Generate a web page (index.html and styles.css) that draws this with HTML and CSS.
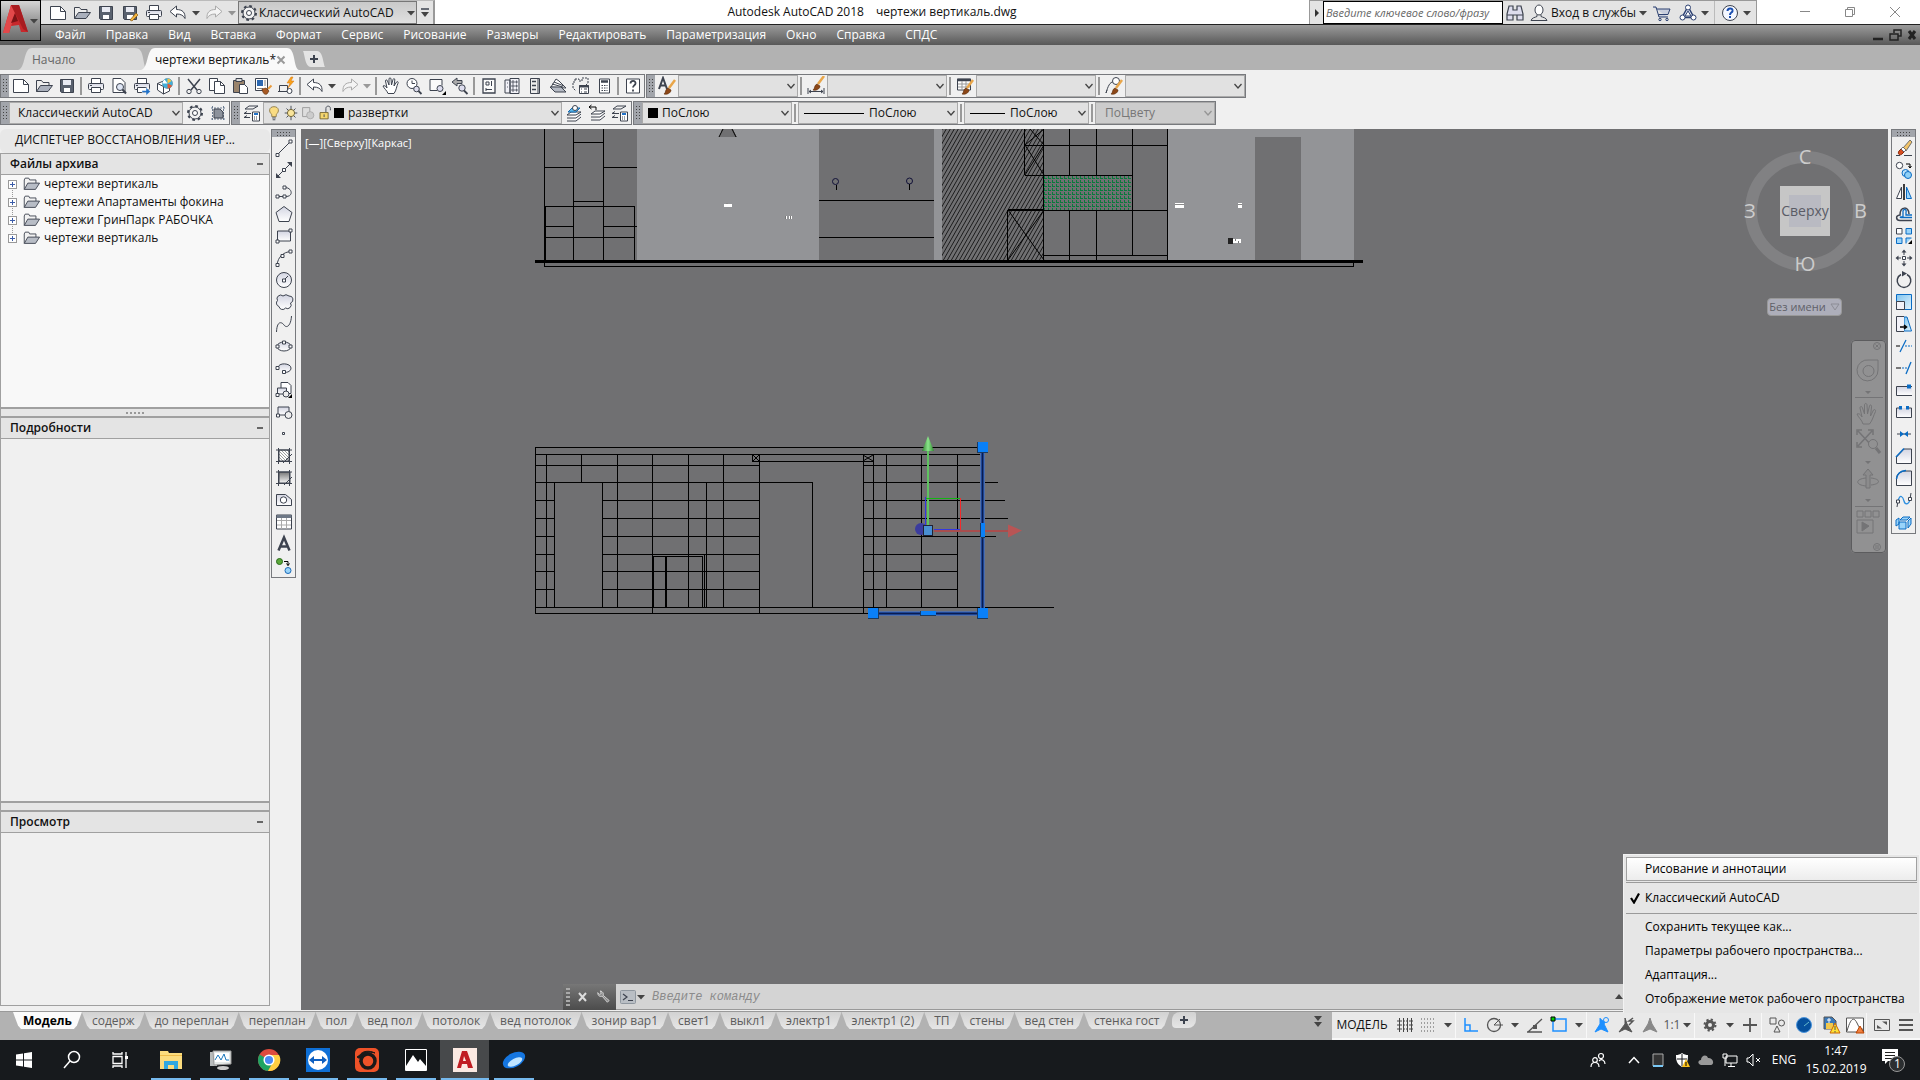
FILE: index.html
```html
<!DOCTYPE html>
<html lang="ru">
<head>
<meta charset="utf-8">
<title>Autodesk AutoCAD 2018 — чертежи вертикаль.dwg</title>
<link rel="stylesheet" href="styles.css">
</head>
<body>
<svg class="defs" aria-hidden="true">
<defs>
<linearGradient id="gl" x1="0" y1="0" x2="0" y2="1"><stop offset="0" stop-color="#d3d5e2"/><stop offset="1" stop-color="#fff"/></linearGradient>
<linearGradient id="gb" x1="0" y1="0" x2="1" y2="1"><stop offset="0" stop-color="#7fc4ee"/><stop offset="1" stop-color="#e4f4fd"/></linearGradient>
<linearGradient id="gd" x1="0" y1="0" x2="0" y2="1"><stop offset="0" stop-color="#777"/><stop offset="1" stop-color="#f4f4f4"/></linearGradient>
<linearGradient id="gg" x1="0" x2="1"><stop offset="0" stop-color="#2f7a2f"/><stop offset=".5" stop-color="#8be58b"/><stop offset="1" stop-color="#2f8a2f"/></linearGradient>
<pattern id="hatch" width="4" height="7" patternUnits="userSpaceOnUse"><path d="M-1 8.75 5-1.75M-5 8.75 1-1.75M3 8.75 9-1.75" stroke="#111" stroke-width=".9"/></pattern>
<pattern id="green" width="4" height="4" patternUnits="userSpaceOnUse"><path d="M.5 0v3M0 2.5h3" stroke="#0a7a3c" stroke-width="1"/></pattern>
<pattern id="small" width="3" height="3" patternUnits="userSpaceOnUse"><path d="M0 0 3 3" stroke="#777" stroke-width=".7"/></pattern>
</defs>
<symbol id="new" viewBox="0 0 20 20"><path d="M2.500 3.500h10l5 5v8h-15z" fill="#fff"/><path d="M12.500 3.500v5h5"/></symbol>
<symbol id="open" viewBox="0 0 20 20"><path d="M2.500 15.500V4.500h5l1.500 2h6v3" fill="#eee"/><path d="M2.500 15.500 6.500 9.500h12l-4.500 6z" fill="#aab0bc"/></symbol>
<symbol id="save" viewBox="0 0 20 20"><path d="M3.500 3.500h13v13h-12l-1-1z" fill="#59616e"/><path d="M6 4h8v5H6z" fill="#e8eaf2" stroke="none"/><path d="M7 12h6v4H7z" fill="#fff" stroke="none"/></symbol>
<symbol id="saveas" viewBox="0 0 20 20"><use href="#save"/><path d="m10 17 6-7 2 2-6 6z" fill="#f5b642" stroke="#8a5a10" stroke-width=".7"/></symbol>
<symbol id="print" viewBox="0 0 20 20"><path d="M5.500 7.500v-5h9v5" fill="#fff"/><rect x="2.500" y="7.500" width="15" height="6" rx="1" fill="url(#gl)"/><path d="M5.500 11.500h9v5h-9z" fill="#fff"/><path d="M4 9.500h2"/></symbol>
<symbol id="preview" viewBox="0 0 20 20"><path d="M4 2.500h8l4 4v10H4z" fill="#fff"/><circle cx="11" cy="11" r="3.500" fill="#dfe6f5"/><path d="m13.500 13.500 3.500 4" stroke-width="2"/></symbol>
<symbol id="publish" viewBox="0 0 20 20"><use href="#print"/><path d="M10 14.500h4v-3l4.500 4-4.500 4v-3h-4z" fill="#2272c8" stroke="#fff" stroke-width=".5"/></symbol>
<symbol id="cube" viewBox="0 0 20 20"><path d="m2.500 7.500 6-2.500v0l6 3v7l-6 3-6-4z" fill="#fff"/><path d="m2.500 7.500 6 3v7.500M8.500 10.500l3-1.500"/><circle cx="12.500" cy="7.500" r="5" fill="#3fb0dc" stroke="#3d7f9c" stroke-width=".6"/><path d="M12.500 7.500V2.500a5 5 0 0 1 4 2.500z" fill="#f5c542" stroke="none"/><path d="m12.500 7.500 4.500 2a5 5 0 0 1-4.500 3z" fill="#e25a35" stroke="none"/><path d="m12.500 7.500-5 0a5 5 0 0 1 2-4z" fill="#fff" stroke="none"/></symbol>
<symbol id="cut" viewBox="0 0 20 20"><path d="m4 3 9 11M16 3 7 14" stroke-width="1.500"/><circle cx="5" cy="15.500" r="2.200"/><circle cx="15" cy="15.500" r="2.200"/></symbol>
<symbol id="copy" viewBox="0 0 20 20"><path d="M2.500 2.500h8v12h-8z" fill="#fff"/><path d="M7.500 5.500h6l4 4v8h-10z" fill="#fff"/><path d="M13.500 5.500v4h4"/></symbol>
<symbol id="paste" viewBox="0 0 20 20"><path d="M3.500 4.500h11v12h-11z" fill="#9a846c"/><path d="M6 2.500h6v3H6z" fill="#ddd"/><path d="M9.500 8.500h5l3 3v6h-8z" fill="#fff"/></symbol>
<symbol id="match" viewBox="0 0 20 20"><path d="M2.500 2.500h12v12h-12z" fill="#fff"/><path d="M4 4h6v6H4z" fill="#2b67b0" stroke="none"/><path d="M12 4v6M4 12.500h6" stroke="#888"/><path d="m9 13 4-1 3 3-2 3c-2 1-4 0-5-5z" fill="#a85a24" stroke="#5a2c0a" stroke-width=".6"/><path d="m15 13 3.500-3.500" stroke="#e89a3c" stroke-width="2"/></symbol>
<symbol id="block" viewBox="0 0 20 20"><path d="M3.500 9.500h8v6h-8zM2 15.500h10"/><circle cx="13.500" cy="15" r="2.500" fill="#fff"/><path d="m15 1-4 6h3l-2 5 6-7h-3l2-4z" fill="#f8a21c" stroke="#d6720a" stroke-width=".5"/></symbol>
<symbol id="undo" viewBox="0 0 20 20"><path d="M2 8.500 8.500 3v3.500c6 0 9 3 8.500 9-1.500-3-4-4.500-8.500-4.500v3z" fill="#fff"/></symbol>
<symbol id="redo" viewBox="0 0 20 20"><path d="M18 8.500 11.500 3v3.500c-6 0-9 3-8.500 9 1.500-3 4-4.500 8.500-4.500v3z" fill="#f4f4f4" stroke="#aaa"/></symbol>
<symbol id="hand" viewBox="0 0 20 20"><path d="M7 17.500c-1-3-4-5-5-7.500 1.500-1 3 .5 4 2L4.500 5c0-1.500 1.500-1.500 2 0L8 9 8 3c0-1.500 2-1.500 2 0l.5 6 1.500-5.500c.5-1.500 2-1 1.800.5L13 10l2.500-4c1-1 2.200 0 1.500 1.200-1.500 3-1.500 7-4 10.300z" fill="#fff"/></symbol>
<symbol id="zoomrt" viewBox="0 0 20 20"><circle cx="8" cy="7.500" r="5" fill="#fff"/><path d="M8 4.500v3h3"/><circle cx="12.500" cy="13" r="2.800" fill="#dde"/><path d="m14.500 15 3 3" stroke-width="1.800"/></symbol>
<symbol id="zoomwin" viewBox="0 0 20 20"><path d="M10 14.500H3v-11h12v6" fill="#fafafa"/><circle cx="13" cy="12.500" r="3" fill="#dde"/><path d="M19 19v-4l-4 4z" fill="#000" stroke="none"/></symbol>
<symbol id="zoomprev" viewBox="0 0 20 20"><path d="m2 6 5-4v2.500h5v3H7V10z" fill="#aaa"/><circle cx="12" cy="12" r="3.200" fill="#dde"/><path d="m14 14.500 3.500 3.500" stroke-width="1.800"/></symbol>
<symbol id="props" viewBox="0 0 20 20"><path d="M4 3h12v14H4z" fill="#fafafa" stroke-width="1.300"/><path d="M7 6h3v3H7zM12.500 5v5M7 13.500h6M7 12v3"/></symbol>
<symbol id="dc" viewBox="0 0 20 20"><path d="M3 4h5v13H3zM8 2.500h9v15H8z" fill="#f2f2f8"/><path d="M10 5h2v2h-2zM14 5h1v2h-1zM10 9h2v2h-2zM14 9h1v2h-1zM10 13h2v2h-2zM14 13h1v2h-1zM5 7h1M5 11h1" stroke-width=".8"/></symbol>
<symbol id="tools" viewBox="0 0 20 20"><path d="M5.500 2.500h9v15h-9z" fill="#eee"/><path d="M7 5.500h4M7 9.500h4M7 13.500h4" stroke-width="1.500"/><path d="M13 3v14"/></symbol>
<symbol id="sheets" viewBox="0 0 20 20"><path d="m3 11 5-8 3 2 7 7z" fill="#fff"/><path d="m2 11 11 0 5 5-11 0z" fill="#b5bac4"/><path d="m4 8 11 3M6 6l10 4"/></symbol>
<symbol id="markup" viewBox="0 0 20 20"><path d="M4 3h4v2h3V2h6v5l-2 2v2M4 3v3H2v6l3 3" stroke-dasharray="2 1"/><path d="M8.500 9.500h9v8h-9z" fill="#fff"/><path d="M8 10.500h10" stroke-width="2"/><path d="M10 13h1M13 13h3M10 16h1M13 16h3"/></symbol>
<symbol id="calc" viewBox="0 0 20 20"><path d="M5.500 3h10v14h-10z" fill="#fff"/><path d="M7 5.500h7" stroke-width="2.500"/><path d="M7.500 9.500h6M7.500 12h6M7.500 14.500h6" stroke-dasharray="1.500 1"/></symbol>
<symbol id="help" viewBox="0 0 20 20"><path d="M3.500 3h13v14h-13z" fill="#fff"/><path d="M7.500 7.500c0-3.500 5.500-3.500 5 0-.3 1.800-2.500 2-2.500 4M10 13.500v2" stroke-width="1.800"/></symbol>
<symbol id="brush" viewBox="0 0 20 20"><path d="m12 12 6-8" stroke="#e9a64a" stroke-width="2.500"/><path d="M7 18c2-1 1-5 4-6l3 2c0 3-4 5-7 4z" fill="#8c4717" stroke="#5a2c0a" stroke-width=".6"/></symbol>
<symbol id="bA" viewBox="0 0 20 20"><path d="m2 13 4-11 4 11M3.500 9.500h5" stroke-width="2"/><use href="#brush"/></symbol>
<symbol id="bD" viewBox="0 0 20 20"><path d="M2 12v6M18 12v6M3 15.500h14M5 14l-2 1.500L5 17M15 14l2 1.500-2 1.500"/><use href="#brush" y="-4"/></symbol>
<symbol id="bT" viewBox="0 0 20 20"><path d="M2.500 3h13v11h-13z" fill="#fff"/><path d="M2 4h14" stroke-width="2.500"/><path d="M3 8h12M3 11h12M7 5v9M11 5v9" stroke="#999"/><use href="#brush"/></symbol>
<symbol id="bM" viewBox="0 0 20 20"><path d="m2 17 1-3M2 17C4 10 6 6 9 6"/><circle cx="12" cy="5" r="3.500" fill="#fff"/><use href="#brush"/></symbol>
<symbol id="gear" viewBox="0 0 20 20"><circle cx="10" cy="10" r="7" stroke-width="2" stroke-dasharray="2.750 2.750"/><circle cx="10" cy="10" r="6" fill="#f2f2f2"/><circle cx="10" cy="10" r="2.500" fill="#fff"/></symbol>
<symbol id="wsave" viewBox="0 0 20 20"><path d="M3 5h14M3 16h14M4.500 3v14M15.500 3v14" stroke-dasharray="2 1" stroke="#6a7a90"/><path d="M6 6h6l3 3v6H6z" fill="#8c929c"/></symbol>
<symbol id="layers" viewBox="0 0 20 20"><path d="m7 3-4 3h8l5-3zM5 8.500l-3 2h7M5 12.500l-3 2h6" fill="none"/><path d="M10.500 9h7v9h-7z" fill="#fff"/><path d="M12 11h4" stroke="#2272c8" stroke-width="2"/><path d="M12 14h4M12 16h4" stroke-dasharray="1 1"/></symbol>
<symbol id="lay2" viewBox="0 0 20 20"><path d="m7 9-4 3h9l5-3zM3 15h9l5-4M3 18h9l5-4" fill="#fff"/><path d="m4 9 4-4h8l-4 4z" fill="#58b6e8" stroke="#176bb0"/><circle cx="11" cy="5" r="2.500" fill="#fff"/></symbol>
<symbol id="lay3" viewBox="0 0 20 20"><path d="m8 8-4 3h9l5-3zM4 14h9l5-4M4 17h9l5-4" fill="#fff"/><path d="M2 4h7v3M4.500 2 2 4l2.500 2" stroke="#000"/></symbol>
<symbol id="bulb" viewBox="0 0 16 20"><path d="M8 3c-6 0-6 6-2.500 8.500V14h5v-2.500C14 9 14 3 8 3z" fill="#f9dc83" stroke="#8f7a45"/><path d="M6 15.500h4M6.500 17.500h3"/></symbol>
<symbol id="sun" viewBox="0 0 16 20"><path d="M8 2v16M1 10h14M3 5l10 10M13 5 3 15"/><circle cx="8" cy="10" r="4" fill="#f9e49a" stroke="#6b5d2e"/></symbol>
<symbol id="vpf" viewBox="0 0 16 20"><path d="M2 4h8v10H2z" fill="#ddd" stroke="#999"/><circle cx="10.500" cy="12.500" r="4" fill="#ccc" stroke="#aaa"/></symbol>
<symbol id="lock" viewBox="0 0 16 20"><path d="M9 9V5c0-3.500 5-3.500 5 0v2"/><path d="M2.500 9.500h9v7h-9z" fill="#f5d66d" stroke="#75642d"/><path d="M7 11.500v3"/></symbol>
<symbol id="folder" viewBox="0 0 20 20"><path d="M2.500 16V5.500l1-2h4l1 2h7V9" fill="#f2f2f2"/><path d="M2.500 16 6.500 9h13l-4.500 7z" fill="#b8bdc6"/></symbol>
<symbol id="line" viewBox="0 0 20 20"><path d="M4 16 16 4"/><g fill="#fff"><path d="M2 15.500h3v3H2zM15 2h3v3h-3z"/></g></symbol>
<symbol id="xline" viewBox="0 0 20 20"><path d="M4 16 16 4"/><path d="M2 18v-5l5 5zM18 2v5l-5-5z" fill="#3d434f" stroke="none"/><path d="M8.500 8.500h3v3h-3z" fill="#fff"/></symbol>
<symbol id="pline" viewBox="0 0 20 20"><path d="M4 14.500h8c8 0 6-9-1-9"/><path d="M2 13h3v3H2zM9 13h3v3H9zM9 4h3v3H9z" fill="#fff"/></symbol>
<symbol id="poly" viewBox="0 0 20 20"><path d="M10 2.500 18 8.500l-3 9H5l-3-9z" fill="url(#gl)"/></symbol>
<symbol id="rect" viewBox="0 0 20 20"><path d="M3.500 5h13v10h-13z" fill="url(#gl)"/><path d="M2 14h3v3H2zM15 3h3v3h-3z" fill="#fff"/></symbol>
<symbol id="arc" viewBox="0 0 20 20"><path d="M3 17C4 9 9 4 17 3.500"/><path d="M2 15.500h3v3H2zM7 6.500h3v3H7zM15 2h3v3h-3z" fill="#fff"/></symbol>
<symbol id="circ" viewBox="0 0 20 20"><circle cx="10" cy="10" r="7.500" fill="url(#gl)"/><path d="m10 10 4-4"/><path d="M8.500 9h3v3h-3z" fill="#fff"/></symbol>
<symbol id="cloud" viewBox="0 0 20 20"><path d="M9 4a3.600 3.600 0 0 0-5.500 4.500 3.600 3.600 0 0 0 1.500 6 3.600 3.600 0 0 0 6.500 1.500 3.600 3.600 0 0 0 5-5 3.600 3.600 0 0 0-1.500-7 4.600 4.600 0 0 0-6 0z" fill="url(#gl)"/></symbol>
<symbol id="spl" viewBox="0 0 20 20"><path d="M2.500 18C3 6 8 8 10 11c3 4 7 0 7.500-9"/></symbol>
<symbol id="ell" viewBox="0 0 20 20"><ellipse cx="10" cy="10.500" rx="7" ry="4.500" fill="url(#gl)"/><path d="M2 9h3v3H2zM15 9h3v3h-3zM8.500 5h3v3h-3z" fill="#fff"/></symbol>
<symbol id="ella" viewBox="0 0 20 20"><path d="M4 10c0-6 13-5 13 0 0 3-3 4.500-7 4.500" fill="url(#gl)"/><path d="M2 8.500h3v3H2zM8.500 12.500h3v3h-3z" fill="#fff"/></symbol>
<symbol id="ins" viewBox="0 0 20 20"><path d="M7 2.500h7l3 3v8H7z" fill="#fff"/><path d="M3.500 8h9v6h-9z" fill="url(#gl)"/><circle cx="12" cy="14" r="3" fill="#eee"/><path d="M2 13.500h3v3H2z" fill="#fff"/><path d="M18 18v-4l-4 4z" fill="#000" stroke="none"/></symbol>
<symbol id="mkb" viewBox="0 0 20 20"><path d="M4 5h11v8H4z" fill="url(#gl)"/><circle cx="14.500" cy="13" r="3.500" fill="#eee"/><path d="M2.500 12h3v3h-3z" fill="#fff"/></symbol>
<symbol id="pt" viewBox="0 0 20 20"><path d="M8.500 8.500h2v2h-2z" fill="#fff"/></symbol>
<symbol id="hat" viewBox="0 0 20 20"><path d="M5 4h10v11H5z" fill="#fff" stroke="none"/><path d="M5 4h10v11H5z" fill="url(#small)"/><path d="M2 4h16M2 15.500h16M4.500 2v16M15.500 2v16M9 17l9-9"/></symbol>
<symbol id="grad" viewBox="0 0 20 20"><path d="M5 4h11v11H5z" fill="url(#gd)"/><path d="M2 4h16M2 15.500h16M4.500 2v16M15.500 2v16M10 17l8-8"/></symbol>
<symbol id="region" viewBox="0 0 20 20"><path d="M2.500 4.500h9l6 5v6h-15z" fill="url(#gl)"/><circle cx="9.500" cy="10" r="3.200" fill="#fff"/></symbol>
<symbol id="table" viewBox="0 0 20 20"><path d="M2.500 3h15v14h-15z" fill="#fff"/><path d="M3 8.500h14M3 13h14M7.500 6v11M12.500 6v11" stroke="#aaa"/><path d="M2.500 4.500h15" stroke-width="3" stroke="#6e7886"/></symbol>
<symbol id="mt" viewBox="0 0 20 20"><path d="m4.500 16.500 5.500-13 5.500 13M6.500 12.500h7" stroke-width="2.500"/></symbol>
<symbol id="adds" viewBox="0 0 20 20"><circle cx="5.500" cy="5.500" r="3" fill="#5aa83a" stroke="#2a6a1a"/><circle cx="14" cy="14.500" r="3" fill="#9ad4fa" stroke="#1a6ab8"/><path d="M10 5.500h4v4M12.500 7.500 14 9.500l1.500-2" stroke="#000"/></symbol>
<symbol id="erase" viewBox="0 0 20 20"><path d="m9 10 7-8 2 2-6 9z" fill="#f2c46a" stroke-width=".7"/><path d="m5 13 2-2 3 3-2 2c-2 2-5 0-3-3z" fill="#d84d20" stroke="#8a2a0a"/><path d="m7 11 2-2 3 3-2 2z" fill="#fff" stroke-width=".7"/><path d="M2 17.500h4M10 17.500h8"/></symbol>
<symbol id="mcopy" viewBox="0 0 20 20"><circle cx="5.500" cy="5.500" r="3.200" fill="#fff"/><path d="M12 4h4v4M14.500 6 16 8l1.500-2" stroke="#000"/><circle cx="11.500" cy="13" r="3.500" fill="#bfe4fa" stroke="#0a6cc4"/><circle cx="14" cy="15" r="3.500" fill="#8fd0f6" stroke="#0a6cc4"/></symbol>
<symbol id="mirror" viewBox="0 0 20 20"><path d="M2.500 16.500 7.500 5v11.500z" fill="#fff"/><path d="M17.500 16.500 12.500 5v11.500z" fill="#9ad4fa" stroke="#0a6cc4"/><path d="M10 2v16" stroke="#000" stroke-width="1.500"/></symbol>
<symbol id="offset" viewBox="0 0 20 20"><path d="M18 16.500H6c-4 0-5-5 0-5.500 0-9 9-9 9-1" stroke-width="1.500"/><path d="M18 13.500H7c-1 0-1-.5 0-.5h2V7c1-3 4-1 3 1v3h6" stroke="#0a6cc4" stroke-width="1.300"/></symbol>
<symbol id="array" viewBox="0 0 20 20"><path d="M2.500 2.500h5.500v5.500H2.500z" fill="#fff"/><path d="M12 2.500h5.500v5.500H12zM2.500 12h5.500v5.500H2.500zM12 17.500V12h5.500" fill="#9ad4fa" stroke="#0a6cc4"/><path d="M18 18v-4l-4 4z" fill="#000" stroke="none"/></symbol>
<symbol id="move" viewBox="0 0 20 20"><path d="M8.500 8.500h3v3h-3zM10 7V4M10 13v3M7 10H4M13 10h3" fill="#fff"/><path d="m10 1.500 2.500 3h-5zM10 18.500l2.500-3h-5zM1.500 10l3-2.500v5zM18.500 10l-3-2.500v5z" fill="#3d434f" stroke="none"/></symbol>
<symbol id="rot" viewBox="0 0 20 20"><path d="M13 4.500a6.800 6.800 0 1 1-6 0" stroke-width="1.500"/><path d="m8 1 5 2.500-5 3z" fill="#3d434f" stroke="none"/></symbol>
<symbol id="scale" viewBox="0 0 20 20"><path d="M2.500 2.500h15v15h-15z" fill="url(#gb)" stroke="#0a6cc4"/><path d="M2.500 9.500h8v8h-8z" fill="#f2f2f8"/></symbol>
<symbol id="stretch" viewBox="0 0 20 20"><path d="M10 3h3l4.500 14H10z" fill="url(#gb)" stroke="#0a6cc4"/><path d="M10 2.500H2.500v15H10" fill="#f2f2f8"/><path d="M6 13h6M10 11l2.500 2-2.500 2" stroke="#000" stroke-width="1.500"/></symbol>
<symbol id="trim" viewBox="0 0 20 20"><path d="M2 10h4" stroke="#000"/><path d="m6 16 6-12" stroke="#0a6cc4" stroke-width="1.300"/><path d="M11 10h7" stroke="#0a6cc4" stroke-dasharray="2 1"/></symbol>
<symbol id="extend" viewBox="0 0 20 20"><path d="M2 10h5" stroke="#000"/><path d="m12 16 5-12" stroke="#0a6cc4" stroke-width="1.300"/><path d="M8 10h5" stroke="#0a6cc4" stroke-dasharray="2 1"/></symbol>
<symbol id="brkp" viewBox="0 0 20 20"><path d="M18 6.500H2.500v9H18" fill="url(#gl)"/><path d="M13 4.500h4v4h-4z" fill="#0a6cc4" stroke="none"/></symbol>
<symbol id="brk" viewBox="0 0 20 20"><path d="M5 6H2.500v9.500h15V6H15" fill="url(#gl)"/><path d="M5 4h3v3.500H5zM12 4h3v3.500h-3z" fill="#0a6cc4" stroke="none"/></symbol>
<symbol id="join" viewBox="0 0 20 20"><path d="M3 10h14"/><path d="m6 7 4 3-4 3zM14 7l-4 3 4 3z" fill="#0a6cc4" stroke="none"/></symbol>
<symbol id="cham" viewBox="0 0 20 20"><path d="M2.500 11v6.500h15V3H10z" fill="url(#gl)"/><path d="m2 11 8-8.500" stroke="#0a6cc4" stroke-width="1.500"/></symbol>
<symbol id="fil" viewBox="0 0 20 20"><path d="M2.500 11v6.500h15V3H12C6 3 2.500 6 2.500 11z" fill="url(#gl)"/><path d="M2.500 11C3 6 6 3 12 2.500" stroke="#0a6cc4" stroke-width="1.500"/></symbol>
<symbol id="blend" viewBox="0 0 20 20"><path d="m3 17 1-6M17 3l-1 6"/><path d="M4 11c2-8 5-4 6 0s5 4 6-2" stroke="#2d8fe0" stroke-width="1.300"/><path d="M2.500 10h3v3h-3zM14.500 7.500h3v3h-3z" fill="#fff"/></symbol>
<symbol id="expl" viewBox="0 0 20 20"><path d="m6 8 3-3h7l-3 3zM14 9l3-3v6l-3 4zM5 10h7v7H5zM2 8l3-2v6l-3 2z" fill="#9ad4fa" stroke="#0a6cc4"/></symbol>
<symbol id="dn" viewBox="0 0 10 10"><path d="M1 3h8L5 7.500z" fill="#444" stroke="none"/></symbol>
<symbol id="chev" viewBox="0 0 10 10"><path d="m1.500 3 3.500 4 3.500-4" stroke="#444" stroke-width="1.300"/></symbol>
</svg>

<header class="title">
  <div class="qat">
    <button aria-label="Создать"><svg><use href="#new"/></svg></button><button aria-label="Открыть"><svg><use href="#open"/></svg></button><button aria-label="Сохранить"><svg><use href="#save"/></svg></button><button aria-label="Сохранить как"><svg><use href="#saveas"/></svg></button><button aria-label="Печать"><svg><use href="#print"/></svg></button><button aria-label="Отменить"><svg><use href="#undo"/></svg></button><button class="dd" aria-label="Список отмены"><svg><use href="#dn"/></svg></button><button aria-label="Повторить"><svg><use href="#redo"/></svg></button><button class="dd dim" aria-label="Список повтора"><svg><use href="#dn"/></svg></button>
    <div class="wsbox"><svg><use href="#gear"/></svg><select aria-label="Рабочее пространство"><option>Классический AutoCAD</option></select><svg class="a"><use href="#dn"/></svg></div>
    <button class="more" aria-label="Адаптация панели"><svg viewBox="0 0 10 12"><path d="M1 2h8" stroke-width="1.500"/><path d="M1 5h8L5 10z" fill="#444" stroke="none"/></svg></button>
  </div>
  <div class="caption"><span>Autodesk AutoCAD 2018</span><span>чертежи вертикаль.dwg</span></div>
  <div class="info">
    <button class="tiny" aria-label="Свернуть"><svg viewBox="0 0 10 10"><path d="m3 1 4 4-4 4z" fill="#333" stroke="none"/></svg></button>
    <input type="text" placeholder="Введите ключевое слово/фразу" aria-label="Поиск">
    <button aria-label="Найти"><svg viewBox="0 0 20 20"><path d="M4 3h4v4h4V3h4l2 8v6h-6v-5H8v5H2v-6zM2 12h6M12 12h6" fill="#dde" stroke-width="1.200"/></svg></button>
    <button class="login"><svg viewBox="0 0 20 20"><ellipse cx="10" cy="7" rx="4" ry="5" fill="#fff"/><path d="M2 17.500c1-3 4-3 6-4v-2M18 17.500c-1-3-4-3-6-4v-2M2 17.500h16" fill="none"/></svg><span>Вход в службы</span><svg class="a"><use href="#dn"/></svg></button>
    <button aria-label="Магазин"><svg viewBox="0 0 20 20"><path d="M1 4h3l3 10h9M5 6h13l-2 5.500H6.500" fill="#c8cede" stroke="#2c4070"/><circle cx="8" cy="16.500" r="1.200" stroke="#2c4070"/><circle cx="15" cy="16.500" r="1.200" stroke="#2c4070"/></svg></button>
    <button class="wide" aria-label="Приложения"><svg viewBox="0 0 20 20"><g stroke="#2c4070"><path d="m10 3.500 6 11H4z" stroke-width="1.500" fill="#dde3f2"/><path d="m10 8 3 5H7z" fill="#fff"/><circle cx="10" cy="4.500" r="2.500" fill="#fff"/><circle cx="4.500" cy="14.500" r="2.500" fill="#fff"/><circle cx="15.500" cy="14.500" r="2.500" fill="#fff"/></g></svg><svg class="a"><use href="#dn"/></svg></button>
    <button class="wide hlp" aria-label="Справка"><svg viewBox="0 0 20 20"><circle cx="10" cy="10" r="7.500" fill="#f4f7ff"/><path d="M7.500 8c0-3.500 5.500-3.500 5 0-.3 1.800-2.500 1.500-2.500 4M10 13v2" stroke="#1b4fb0" stroke-width="2"/></svg><svg class="a"><use href="#dn"/></svg></button>
  </div>
  <div class="win">
    <button aria-label="Свернуть окно"><svg viewBox="0 0 12 12"><path d="M1 5.500h10"/></svg></button><button aria-label="Восстановить окно"><svg viewBox="0 0 12 12"><path d="M1.500 3.500h7v7h-7zM3.500 3.500v-2h7v7h-2"/></svg></button><button aria-label="Закрыть окно"><svg viewBox="0 0 12 12"><path d="m1 1 10 10M11 1 1 11"/></svg></button>
  </div>
</header>
<button class="app" aria-label="Меню приложения"><svg class="logo" viewBox="0 0 26 32"><path d="M0 30 8 2h8l9 27h-7l-2-7-8 1-2 7z" fill="#c8282c"/><path d="m8 2 4 8-6 20H0z" fill="#e2484a"/><path d="m12 10 3 8-7 2z" fill="#7b1316"/><path d="m8 2 8 0 9 27-5-3-8-16z" fill="#a81c20"/></svg><svg class="a"><use href="#dn"/></svg></button>

<nav class="menu">
  <button>Файл</button><button>Правка</button><button>Вид</button><button>Вставка</button><button>Формат</button><button>Сервис</button><button>Рисование</button><button>Размеры</button><button>Редактировать</button><button>Параметризация</button><button>Окно</button><button>Справка</button><button>СПДС</button>
  <svg class="mdi" viewBox="0 0 46 16"><path d="M1 12h10" stroke-width="2.500"/><path d="M18 7h8v6h-8zM22 6V3h7v6h-3" stroke-width="1.500"/><path d="m37 4 6 8M43 4l-6 8" stroke-width="3"/></svg>
</nav>

<div class="ftabs">
  <button class="ft start"><svg class="shape" viewBox="0 0 128 22" preserveAspectRatio="none"><path d="M0 22C8 20 5 0 14 0h103c9 0 7 11 11 22z" fill="#dadada"/></svg><span>Начало</span></button>
  <button class="ft cur"><svg class="shape" viewBox="0 0 158 22" preserveAspectRatio="none"><path d="M0 22C8 20 5 0 14 0h132c9 0 6 20 12 22z" fill="#f9f9f9"/></svg><span>чертежи вертикаль*</span><svg class="x" viewBox="0 0 10 10"><path d="m1.500 1.500 7 7M8.500 1.500l-7 7" stroke="#999" stroke-width="2"/></svg></button>
  <button class="plus" aria-label="Новая вкладка"><svg viewBox="0 0 22 16"><path d="M0 0h14c6 0 6 12 8 16H8C2 16 2 4 0 0z" fill="#e4e4e4" stroke="none"/><path d="M11 4v8M7 8h8" stroke-width="2"/></svg></button>
</div>

<div class="bars">
  <div class="row">
    <div class="bar" role="toolbar" aria-label="Стандартная"><i class="grip"></i>
      <button aria-label="Создать"><svg><use href="#new"/></svg></button><button aria-label="Открыть"><svg><use href="#open"/></svg></button><button aria-label="Сохранить"><svg><use href="#save"/></svg></button><i class="sep"></i><button aria-label="Печать"><svg><use href="#print"/></svg></button><button aria-label="Предварительный просмотр"><svg><use href="#preview"/></svg></button><button aria-label="Публикация"><svg><use href="#publish"/></svg></button><button aria-label="3D-печать"><svg><use href="#cube"/></svg></button><i class="sep"></i><button aria-label="Вырезать"><svg><use href="#cut"/></svg></button><button aria-label="Копировать"><svg><use href="#copy"/></svg></button><button aria-label="Вставить"><svg><use href="#paste"/></svg></button><button aria-label="Копирование свойств"><svg><use href="#match"/></svg></button><button aria-label="Редактор блоков"><svg><use href="#block"/></svg></button><i class="sep"></i><button aria-label="Отменить"><svg><use href="#undo"/></svg></button><button class="dd" aria-label="Список отмены"><svg><use href="#dn"/></svg></button><button aria-label="Повторить"><svg><use href="#redo"/></svg></button><button class="dd dim" aria-label="Список повтора"><svg><use href="#dn"/></svg></button><i class="sep"></i><button aria-label="Панорамирование"><svg><use href="#hand"/></svg></button><button aria-label="Зумирование"><svg><use href="#zoomrt"/></svg></button><button aria-label="Рамка"><svg><use href="#zoomwin"/></svg></button><button aria-label="Предыдущий вид"><svg><use href="#zoomprev"/></svg></button><i class="sep"></i><button aria-label="Свойства"><svg><use href="#props"/></svg></button><button aria-label="Центр управления"><svg><use href="#dc"/></svg></button><button aria-label="Палитры"><svg><use href="#tools"/></svg></button><button aria-label="Подшивки"><svg><use href="#sheets"/></svg></button><button aria-label="Пометки"><svg><use href="#markup"/></svg></button><button aria-label="Калькулятор"><svg><use href="#calc"/></svg></button><i class="sep"></i><button aria-label="Справка"><svg><use href="#help"/></svg></button>
    </div>
    <div class="bar" role="toolbar" aria-label="Стили"><i class="grip"></i>
      <button aria-label="Стиль текста"><svg><use href="#bA"/></svg></button><div class="combo c119"><select aria-label="Текстовый стиль"><option></option></select><svg class="a"><use href="#chev"/></svg></div><i class="sep"></i>
      <button aria-label="Размерный стиль"><svg><use href="#bD"/></svg></button><div class="combo c119"><select aria-label="Стиль размеров"><option></option></select><svg class="a"><use href="#chev"/></svg></div><i class="sep"></i>
      <button aria-label="Стиль таблиц"><svg><use href="#bT"/></svg></button><div class="combo c119"><select aria-label="Табличный стиль"><option></option></select><svg class="a"><use href="#chev"/></svg></div><i class="sep"></i>
      <button aria-label="Стиль мультивыносок"><svg><use href="#bM"/></svg></button><div class="combo c119"><select aria-label="Стиль выносок"><option></option></select><svg class="a"><use href="#chev"/></svg></div>
    </div>
  </div>
  <div class="row">
    <div class="bar"><i class="grip"></i><div class="combo c174"><select aria-label="Рабочие пространства"><option>Классический AutoCAD</option></select><svg class="a"><use href="#chev"/></svg></div><button aria-label="Параметры"><svg><use href="#gear"/></svg></button><button aria-label="Моё пространство"><svg><use href="#wsave"/></svg></button></div>
    <div class="bar"><i class="grip"></i><button aria-label="Свойства слоя"><svg><use href="#layers"/></svg></button><div class="combo c299"><svg class="m"><use href="#bulb"/></svg><svg class="m"><use href="#sun"/></svg><svg class="m"><use href="#vpf"/></svg><svg class="m"><use href="#lock"/></svg><i class="sw"></i><select aria-label="Слой"><option>развертки</option></select><svg class="a"><use href="#chev"/></svg></div><button aria-label="Сделать слой текущим"><svg><use href="#lay2"/></svg></button><button aria-label="Предыдущий слой"><svg><use href="#lay3"/></svg></button><button aria-label="Состояния слоёв"><svg><use href="#layers"/></svg></button></div>
    <div class="bar"><i class="grip"></i><div class="combo c149"><i class="sw"></i><select aria-label="Цвет"><option>ПоСлою</option></select><svg class="a"><use href="#chev"/></svg></div><i class="sep"></i><div class="combo c159"><i class="ln l60"></i><select aria-label="Тип линий"><option>ПоСлою</option></select><svg class="a"><use href="#chev"/></svg></div><i class="sep"></i><div class="combo c125"><i class="ln"></i><select aria-label="Вес линий"><option>ПоСлою</option></select><svg class="a"><use href="#chev"/></svg></div><i class="sep"></i><div class="combo c119 off"><select aria-label="Стиль печати" disabled><option>ПоЦвету</option></select><svg class="a"><use href="#chev"/></svg></div></div>
  </div>
</div>

<main>
  <aside class="panel">
    <h1>ДИСПЕТЧЕР ВОССТАНОВЛЕНИЯ ЧЕР...</h1>
    <h2>Файлы архива<b></b></h2>
    <ul class="tree">
      <li><i class="exp"></i><svg><use href="#folder"/></svg>чертежи вертикаль</li>
      <li><i class="exp"></i><svg><use href="#folder"/></svg>чертежи Апартаменты фокина</li>
      <li><i class="exp"></i><svg><use href="#folder"/></svg>чертежи ГринПарк РАБОЧКА</li>
      <li><i class="exp"></i><svg><use href="#folder"/></svg>чертежи вертикаль</li>
    </ul>
    <div class="split dots"></div>
    <h2>Подробности<b></b></h2>
    <div class="details"></div>
    <div class="split"></div>
    <h2>Просмотр<b></b></h2>
    <div class="prev"></div>
  </aside>
  <div class="vbar" role="toolbar" aria-label="Рисование"><i class="vgrip"></i><button aria-label="Отрезок"><svg><use href="#line"/></svg></button><button aria-label="Прямая"><svg><use href="#xline"/></svg></button><button aria-label="Полилиния"><svg><use href="#pline"/></svg></button><button aria-label="Многоугольник"><svg><use href="#poly"/></svg></button><button aria-label="Прямоугольник"><svg><use href="#rect"/></svg></button><button aria-label="Дуга"><svg><use href="#arc"/></svg></button><button aria-label="Круг"><svg><use href="#circ"/></svg></button><button aria-label="Облако"><svg><use href="#cloud"/></svg></button><button aria-label="Сплайн"><svg><use href="#spl"/></svg></button><button aria-label="Эллипс"><svg><use href="#ell"/></svg></button><button aria-label="Эллиптическая дуга"><svg><use href="#ella"/></svg></button><button aria-label="Вставить блок"><svg><use href="#ins"/></svg></button><button aria-label="Создать блок"><svg><use href="#mkb"/></svg></button><button aria-label="Точка"><svg><use href="#pt"/></svg></button><button aria-label="Штриховка"><svg><use href="#hat"/></svg></button><button aria-label="Градиент"><svg><use href="#grad"/></svg></button><button aria-label="Область"><svg><use href="#region"/></svg></button><button aria-label="Таблица"><svg><use href="#table"/></svg></button><button aria-label="Текст"><svg><use href="#mt"/></svg></button><button aria-label="Добавить выбранные"><svg><use href="#adds"/></svg></button></div>

  <section class="canvas">
    <svg class="drawing"><g transform="translate(-301 -129)" fill="none" stroke="#000" shape-rendering="crispEdges">
      <path d="M637 129h182v131H637zM934 129h8v131h-8zM1167 129h187v131h-187z" fill="#939497" stroke="none"/>
      <path d="M1255 137h46v123h-46z" fill="#707072" stroke="none"/>
      <path d="M722 129h11l4 8h-18z" fill="#707072" stroke="none"/><path d="m723 129-4 8M732 129l4 8" shape-rendering="auto"/>
      <path d="M544.500 129v138M573.500 129v131M603.500 129v131M634.500 206v54M573 142.500h30M545 167.500h28M603 167.500h34M573 201.500h30M545 206.500h90M545 226.500h28M603 226.500h34M545 237.500h90M545.500 206v54"/>
      <path d="M544 266.500h809.500v-5"/><path d="M535 261.500h828" stroke-width="3"/>
      <path d="M819 200.500h115M819 237.500h115"/>
      <g shape-rendering="auto"><circle cx="835.500" cy="181.500" r="3" stroke="#111138"/><circle cx="909.500" cy="181" r="3" stroke="#111138"/><path d="M836.500 185v5M909.500 184v6"/></g>
      <path d="M942 129h102v131H942z" fill="url(#hatch)" stroke="none" shape-rendering="auto"/>
      <path d="M1044 176h88v34h-88z" fill="url(#green)" stroke="none"/>
      <path d="M1024.500 129v46M1025 175.500h108M1025 145.500h142M1043.500 129v131M1069.500 129v46M1096.500 129v46M1132.500 129v126M1167.500 129v131M1008 209.500h36M1008 210.500h159M1007.500 210v50M1069.500 210v50M1096.500 210v50M1044 255.500h123"/>
      <path d="m1008 210 36 50M1044 210l-36 50M1025 145l19 30M1044 145l-19 30M1030 129l14 16M1044 129l-19 16" shape-rendering="auto"/>
      <path d="M724 204h8v3h-8zM785 216h2v3h-2zM789 216h3v3h-3zM1175 203h9v5h-9zM1238 203h4v5h-4zM1233 239h8v4h-8z" fill="#fff" stroke="none"/><path d="M1228 238h5v6h-5z" fill="#222" stroke="none"/><path d="M1175 204.500h9M1238 204.500h4M726 203.500h2" stroke="#888"/><path d="M785.500 216v3M790.500 216v3M1235.500 239v2M1238.500 241v2" stroke="#777"/>
      <path d="M535 447.500h448M535 454.500h447M535 465.500h224M863 465.500h119M535 482.500h278M864 482.500h134"/>
      <path d="M535 500.500h19M602 500.500h157M864 500.500h141M535 518.500h19M602 518.500h157M864 518.500h144M535 536.500h19M602 536.500h157M864 536.500h132M535 554.500h19M602 554.500h157M864 554.500h93M535 571.500h19M602 571.500h157M864 571.500h93M535 589.500h19M602 589.500h157M864 589.500h93M535 607.500h519M535 613.500h340"/>
      <path d="M535.500 447v166M546.500 454v153M554.500 482v125M581.500 454v28M602.500 482v125M617.500 454v153M652.500 454v159M688.500 454v153M706.500 482v125M723.500 454v153M759.500 454v159M812.500 482v125M863.500 454v159M873.500 454v153M886.500 454v153M921.500 454v153M957.500 454v153"/>
      <path d="M759 461.500h104M752.500 454v7h7M863 461.500h10M653.500 607v-51h49v51M704.500 554v53"/><path d="M666 556v51" stroke-width="2"/>
      <path d="m753 455 6 6M759 455l-6 6M863 455l10 6M873 455l-10 6" shape-rendering="auto"/>
      <path d="M982.500 447v166M873 613.500h110" stroke="#5270a8" stroke-width="5"/><path d="M982.500 447v166M873 613.500h110" stroke="#1c4494" stroke-width="3"/><path d="M982.500 447v166M873 613.500h110" stroke="#0a1c50"/>
      <path d="M928 527v-77" stroke="#5fc260" stroke-width="2"/><path d="m928 436 6 15h-12z" fill="url(#gg)" stroke="none" shape-rendering="auto"/>
      <path d="M934 530.500h74" stroke="#a84e4e" stroke-width="2"/><path d="m1022 530.500-14-6v13z" fill="#b85555" stroke="none" shape-rendering="auto"/>
      <circle cx="921" cy="529" r="6" fill="#3b3c9e" stroke="none" shape-rendering="auto"/>
      <path d="M925.500 497v30M934 529.500h26" stroke="#3438e0"/><path d="M926 498.500h34" stroke="#14b414"/><path d="M960.500 498v32" stroke="#f22c2c"/>
      <path d="M923.500 525.500h9v10h-9z" fill="#4a8fd2" stroke="#223"/>
      <path d="M977 442h11v11h-11zM977 608h11v11h-11zM868 608h11v11h-11zM981 523h4v14h-4zM920 611h16v5h-16z" fill="#0a80f8" stroke="none"/>
      <path d="M977.500 442v10.500h10.500M977.500 608v10.500h10.500M868 618.500h10.500v-10.500M981 537.500h4M980.500 523v14M920 615.500h16M920.500 611v4" stroke="#1b3a60"/>
    </g></svg>
    <div class="vplabel">[—][Сверху][Каркас]</div>
    <div class="cube"><span class="n">С</span><span class="w">З</span><button>Сверху</button><span class="e">В</span><span class="s">Ю</span></div>
    <button class="ucs">Без имени<svg viewBox="0 0 10 10"><path d="M1 2h8L5 8z" stroke="#8c8d96"/></svg></button>
    <div class="nav"><svg viewBox="-1 0 35 213"><g stroke="#747476"><circle cx="25" cy="6" r="3.500"/><path d="m23.500 4.500 3 3M26.500 4.500l-3 3"/><path d="M17 20h9v10a10.500 10.500 0 1 1-9-10z"/><circle cx="16.500" cy="31" r="5.500"/><path d="M3 57.500h28M3 166.500h28"/><path d="M13 51h6l-3 3zM13 121h6l-3 3zM13 159h6l-3 3z" fill="#747476" stroke="none"/><path d="M11 84c-1-4-5-7-6-10 2-1 4 1 5 3L8 68c0-2 2-2 2.500 0l2 6 0-9c0-2 2.500-2 2.500 0l.5 9 2-8c.5-2 2.500-1 2 1l-1 9 3-6c1-1 2.500 0 2 1.500-2 4-3 9-6 12.500z"/><path d="m6 91 14 15M20 91 6 106M5 95v-5h5M16 90h5v5M5 102v5h5" stroke-width="1.500"/><circle cx="21" cy="104" r="4.500" fill="#919192"/><path d="m24 108 4 5" stroke-width="3"/><path d="M14 148v-13h-3l5-6 5 6h-3v13z" fill="#8b8b8c"/><path d="M14 138c-11 1-11 7 0 8M19 138c10 1 10 6 0 7"/><path d="M5 171h6v6H5zM13 171h6v6h-6zM21 171h6v6h-6zM5 180h16v13H5z"/><path d="m10 182 7 4-7 5z" fill="#747476"/><circle cx="25" cy="207" r="3.500"/><path d="M23 206h4M23 208h4"/></g></svg></div>
    <div class="cmd"><div class="cmdh"><i class="grip2"></i><svg viewBox="0 0 14 14"><path d="m3 3 7 8M10 3l-7 8" stroke="#ddd" stroke-width="2"/></svg><svg viewBox="0 0 16 16"><path d="M2 3c0 4 3 5 5 4l6 7 2-2-7-6c1-2 0-4-3-5l1 3-2 1z" fill="#888" stroke="#ddd"/></svg></div><button aria-label="Недавние команды"><svg viewBox="0 0 16 16"><rect x=".5" y="1.500" width="15" height="13" rx="1" fill="#b9bec4" stroke="#8f979f"/><path d="m3 5 4 3-4 3M8 11.500h5" stroke-width="1.200"/></svg><svg class="a"><use href="#dn"/></svg></button><input type="text" placeholder="Введите команду" aria-label="Командная строка"><svg class="a up" viewBox="0 0 10 10"><path d="M1 7h8L5 2z" fill="#444" stroke="none"/></svg></div>
  </section>

  <div class="vbar mod" role="toolbar" aria-label="Редактирование"><i class="vgrip"></i><button aria-label="Стереть"><svg><use href="#erase"/></svg></button><button aria-label="Копировать"><svg><use href="#mcopy"/></svg></button><button aria-label="Зеркало"><svg><use href="#mirror"/></svg></button><button aria-label="Подобие"><svg><use href="#offset"/></svg></button><button aria-label="Массив"><svg><use href="#array"/></svg></button><button aria-label="Перенести"><svg><use href="#move"/></svg></button><button aria-label="Повернуть"><svg><use href="#rot"/></svg></button><button aria-label="Масштаб"><svg><use href="#scale"/></svg></button><button aria-label="Растянуть"><svg><use href="#stretch"/></svg></button><button aria-label="Обрезать"><svg><use href="#trim"/></svg></button><button aria-label="Удлинить"><svg><use href="#extend"/></svg></button><button aria-label="Разорвать в точке"><svg><use href="#brkp"/></svg></button><button aria-label="Разорвать"><svg><use href="#brk"/></svg></button><button aria-label="Соединить"><svg><use href="#join"/></svg></button><button aria-label="Фаска"><svg><use href="#cham"/></svg></button><button aria-label="Сопряжение"><svg><use href="#fil"/></svg></button><button aria-label="Сплайн перехода"><svg><use href="#blend"/></svg></button><button aria-label="Расчленить"><svg><use href="#expl"/></svg></button></div>
</main>

<footer class="status">
  <div class="ltabs"><button class="on">Модель</button><button>содерж</button><button>до переплан</button><button>переплан</button><button>пол</button><button>вед пол</button><button>потолок</button><button>вед потолок</button><button>зонир вар1</button><button>свет1</button><button>выкл1</button><button>электр1</button><button>электр1 (2)</button><button>ТП</button><button>стены</button><button>вед стен</button><button>стенка гост</button><button class="add" aria-label="Новый лист"><svg viewBox="0 0 10 10"><path d="M5 1v8M1 5h8" stroke-width="2"/></svg></button></div>
  <button class="dbl" aria-label="Ещё"><svg viewBox="0 0 10 14"><path d="M1 1h8L5 6zM1 7h8l-4 5z" fill="#444" stroke="none"/></svg></button>
  <div class="tools">
    <button class="model">МОДЕЛЬ</button>
    <button aria-label="Сетка"><svg viewBox="0 0 20 20"><path d="M5.500 3v14M9.500 3v14M13.500 3v14M17.500 3v14" stroke="#444"/><path d="M3 6h16M3 10h16M3 14h16" stroke="#444" stroke-dasharray="2 1"/></svg></button>
    <button aria-label="Шаг"><svg viewBox="0 0 20 20"><path d="M3 4h15M3 8h15M3 12h15M3 16h15" stroke-dasharray="1 2"/></svg></button>
    <button class="dd g" aria-label="Параметры шага"><svg><use href="#dn"/></svg></button>
    <button aria-label="Орто"><svg viewBox="0 0 20 20"><path d="M4 3v13h13M4 10h5v6" stroke="#1e90ff" stroke-width="1.500"/></svg></button>
    <button aria-label="Отслеживание"><svg viewBox="0 0 20 20"><circle cx="9" cy="10" r="6.500" stroke-width="1.300"/><path d="M9 10h9M9 10l6-6"/></svg></button>
    <button class="dd" aria-label="Углы"><svg><use href="#dn"/></svg></button>
    <button aria-label="Объектное отслеживание"><svg viewBox="0 0 20 20"><path d="M2 17h15M3 17 17 4" stroke-width="1.300"/><path d="M8 10h4v4H8z" fill="#555" stroke="none"/></svg></button>
    <button aria-label="Привязка"><svg viewBox="0 0 20 20"><path d="M4 4h13v12H4z" stroke="#1e90ff" stroke-width="1.500"/><path d="M2 2h4v4H2z" fill="#0c0" stroke="#000"/></svg></button>
    <button class="dd g" aria-label="Режимы привязки"><svg><use href="#dn"/></svg></button>
    <button aria-label="Видимость аннотаций"><svg viewBox="0 0 20 20"><path d="M8 3v6L3 17l6-3 7 3-4-8 1-2" fill="#1e90ff" stroke="#1e90ff"/><circle cx="14" cy="5" r="2.500" stroke="#1e90ff"/></svg></button>
    <button aria-label="Автомасштаб"><svg viewBox="0 0 20 20"><path d="M9 3v6L3 17l6-3 7 3-5-8z" fill="#555" stroke="#555"/><path d="m17 3-4 3h4l-4 4" stroke-width="1.500"/></svg></button>
    <button aria-label="Масштаб аннотаций"><svg viewBox="0 0 20 20"><path d="M10 3 8 9l-5 8 7-3 7 3-5-8z" fill="#888" stroke="#888"/></svg></button>
    <button class="sc g">1:1<svg class="a"><use href="#dn"/></svg></button>
    <button aria-label="Переключение рабочих пространств"><svg viewBox="0 0 20 20"><circle cx="10" cy="10" r="3.500" stroke="#555" stroke-width="3"/><circle cx="10" cy="10" r="5.500" stroke="#555" stroke-width="2" stroke-dasharray="2.200 2.120"/></svg></button>
    <button class="dd" aria-label="Список пространств"><svg><use href="#dn"/></svg></button>
    <button class="g" aria-label="Монитор аннотаций"><svg viewBox="0 0 20 20"><path d="M10 3v14M3 10h14" stroke="#555" stroke-width="1.800"/></svg></button>
    <button class="g" aria-label="Изоляция"><svg viewBox="0 0 20 20"><path d="M3 3h6v6H3zM7 17l3-6 3 6z"/><circle cx="14.500" cy="8" r="3"/></svg></button>
    <button class="g" aria-label="Производительность графики"><svg viewBox="0 0 20 20"><circle cx="10" cy="10" r="7.500" fill="#06509c" stroke="#4a94dc"/><path d="m10 11 5-4" stroke="#6bc"/></svg></button>
    <button aria-label="Связи данных"><svg viewBox="0 0 20 20"><path d="M3 2h8l4 4v8H3z" fill="#3a79b8"/><path d="M5 8h7v6H5z" fill="#f3c84b" stroke="none"/><path d="M6 5h4M8 3v5" stroke="#fff"/><path d="m14 8 5 10H9z" fill="#ffe135" stroke="#c60"/><path d="M14 11v4M14 16v1.500"/></svg></button>
    <button class="g" aria-label="Уведомления"><svg viewBox="0 0 20 20"><path d="M1.500 3h17v14h-17z" fill="#fff"/><path d="M2 16C6 2 9 2 12 8s3 7 6 6"/><path d="m15 11 4 7h-8z" fill="#f08040" stroke="#b40"/></svg></button>
    <button aria-label="Очистить экран"><svg viewBox="0 0 20 20"><path d="M2.500 4.500h15v11h-15z"/><path d="M10 6.500h5V10zM10 13.500H5V10z" fill="#555" stroke="none"/></svg></button>
    <button aria-label="Адаптация"><svg viewBox="0 0 20 20"><path d="M3 5h14M3 10h14M3 15h14" stroke="#555" stroke-width="2"/></svg></button>
  </div>
  <div class="popup" role="menu">
    <button role="menuitem" class="hot">Рисование и аннотации</button><hr>
    <button role="menuitem" class="tall"><svg viewBox="0 0 12 12"><path d="m2 6 3 4.500L10 1.500" stroke="#000" stroke-width="2.200"/></svg>Классический AutoCAD</button><hr>
    <button role="menuitem">Сохранить текущее как...</button><button role="menuitem">Параметры рабочего пространства...</button><button role="menuitem">Адаптация...</button><button role="menuitem">Отображение меток рабочего пространства</button>
  </div>
</footer>

<div class="task">
  <button aria-label="Пуск"><svg viewBox="0 0 24 24"><path d="m4 6.500 7-1v6H4zM12 5.300l8-1.300v7.500h-8zM4 12.500h7v6l-7-1zM12 12.500h8V20l-8-1.300z" fill="#fff" stroke="none"/></svg></button>
  <button aria-label="Поиск"><svg viewBox="0 0 24 24"><circle cx="14" cy="9" r="5.500" stroke="#fff" stroke-width="1.500"/><path d="m10 13-6 7" stroke="#fff" stroke-width="1.500"/></svg></button>
  <button class="view" aria-label="Представление задач"><svg viewBox="0 0 24 24"><path d="M5 8.500h9v7H5zM5 4v2h9V4M5 20v-2h9v2M18 4v16" stroke="#fff" stroke-width="1.300"/><path d="M17 8h3v3h-3z" fill="#fff" stroke="none"/></svg></button>
  <button class="run" aria-label="Проводник"><svg viewBox="0 0 24 24"><path d="M1 3h8l1 2h13v16H1z" fill="#fbdc7e" stroke="none"/><path d="M1 7h22v1H1z" fill="#eebc4a" stroke="none"/><path d="M5 21v-8h14v8h-4v-4H9v4z" fill="#31a8e0" stroke="none"/></svg></button>
  <button class="run" aria-label="Диспетчер ресурсов"><svg viewBox="0 0 24 24"><path d="M2 4h7v14H2z" fill="#b8bcbc" stroke="none"/><path d="M5 3h18v13l-17 1z" fill="#e5e9e8" stroke="#999"/><path d="M7 5h14v9H7z" fill="#fff" stroke="none"/><path d="m7 12 3-5 3 5 3-6 2 6h3" stroke="#1a78bc"/><ellipse cx="15" cy="20" rx="6" ry="2" fill="#ccc" stroke="none"/></svg></button>
  <button class="run" aria-label="Chrome"><svg viewBox="0 0 24 24"><circle cx="12" cy="12" r="11" fill="#dd4b3e" stroke="none"/><path d="M12 12 2.500 6.500A11 11 0 0 0 11 23l5-8z" fill="#1fa463" stroke="none"/><path d="M12 7h10A11 11 0 0 1 11 23l5-9z" fill="#ffce42" stroke="none"/><circle cx="12" cy="12" r="4.800" fill="#4a8af4" stroke="#fff" stroke-width="1.500"/></svg></button>
  <button class="run" aria-label="TeamViewer"><svg viewBox="0 0 24 24"><path d="M0 0h24v24H0z" fill="#0e6fd6" stroke="none"/><circle cx="12" cy="12" r="10" fill="#fff" stroke="none"/><path d="m3 12 5-4v3h8V8l5 4-5 4v-3H8v3z" fill="#0e5fc0" stroke="none"/></svg></button>
  <button class="run" aria-label="Corona"><svg viewBox="0 0 24 24"><rect width="24" height="24" rx="5" fill="#ee5228" stroke="none"/><circle cx="13" cy="13" r="7" stroke="#191919" stroke-width="3.500"/><path d="M2 9c2 2 3 1 5-1 2-3 7-5 13-3C14 2 7 3 5 7zM4 13l3 3" fill="#191919" stroke="#191919"/></svg></button>
  <button class="run" aria-label="Фотографии"><svg viewBox="0 0 24 24"><path d="M1.500 1.500h21v21h-21z" stroke="#fff" fill="#101315"/><path d="m2 18 7-11 5 7 2-3 6 7v4H2z" fill="#fff" stroke="none"/></svg></button>
  <button class="run act" aria-label="AutoCAD"><svg viewBox="0 0 24 24"><path d="M0 0h24v24H0z" fill="#fbe9e2" stroke="none"/><path d="m4 20 5-17h5l6 17h-5l-1-4H9l-1 4z" fill="#c01c22" stroke="none"/><path d="m11 8 2 5h-3z" fill="#fbe9e2" stroke="none"/></svg></button>
  <button class="run" aria-label="Браузер"><svg viewBox="0 0 24 24"><ellipse cx="12" cy="12" rx="12" ry="7" transform="rotate(-28 12 12)" fill="#1576e0" stroke="none"/><ellipse cx="13" cy="14" rx="8" ry="3.500" transform="rotate(-28 13 14)" fill="#bfe4ff" stroke="none"/></svg></button>
  <div class="tray">
    <button class="ppl" aria-label="Люди"><svg viewBox="0 0 16 16"><g stroke="#fff" stroke-width="1.200"><circle cx="11" cy="4" r="2.500"/><circle cx="5" cy="8" r="2.300"/><path d="M1 15c0-6 8-6 8 0M9 9c3-3 6 0 6 3"/></g></svg></button>
    <button aria-label="Скрытые значки"><svg viewBox="0 0 16 16"><path d="m3 11 5-5.500L13 11" stroke="#fff" stroke-width="1.500"/></svg></button>
    <button aria-label="Устройство"><svg viewBox="0 0 16 16"><path d="M3 2h10v12H3z" fill="#333" stroke="#aaa"/><path d="M3 14h10" stroke="#7ac8f5" stroke-width="2"/></svg></button>
    <button aria-label="Защитник"><svg viewBox="0 0 16 16"><path d="M8 1c2 1.500 4 2 6 2 0 6-1 9-6 12C3 12 2 9 2 3c2 0 4-.5 6-2z" fill="#fff" stroke="none"/><path d="M8 2v12M3 7h10" stroke="#16191c"/><path d="m12 7 4 8H8z" fill="#fcc21b" stroke="none"/><path d="M12 10v4" stroke="#000"/></svg></button>
    <button aria-label="OneDrive"><svg viewBox="0 0 16 16"><path d="M3 13c-4-1-3-5 0-5 0-5 6-6 7-2 5-1 7 6 3 7z" fill="#999" stroke="none"/></svg></button>
    <button aria-label="Сеть"><svg viewBox="0 0 16 16"><path d="M4 4h11v7H4zM9 11v3M6 14.500h7M1 2h4v4H1zM3 6v8" stroke="#fff"/></svg></button>
    <button aria-label="Звук"><svg viewBox="0 0 16 16"><path d="M1 6h2l4-4v12l-4-4H1zM10 6l4 4M14 6l-4 4" stroke="#fff"/></svg></button>
    <button class="lang">ENG</button>
    <button class="clock"><span>1:47</span><span>15.02.2019</span></button>
    <button class="note" aria-label="Центр уведомлений"><svg viewBox="0 0 24 26"><path d="M1 2h16v12H7l-3 3v-3H1z" fill="#fff" stroke="none"/><path d="M4 5.500h10M4 8.500h10M4 11.500h7" stroke="#222"/><circle cx="16" cy="17" r="7.500" fill="#2b2e30" stroke="#999"/></svg><span>1</span></button>
  </div>
</div>
</body>
</html>
```
FILE: styles.css
```css
* { box-sizing: border-box; }
body {
  margin: 0;
  height: 100vh;
  display: flex;
  flex-direction: column;
  background: #f0f0f0;
  color: #111;
  font: 12px/16px "Open Sans", "Noto Sans", sans-serif;
  overflow: hidden;
  position: relative;
}
button, select, input { font: inherit; color: inherit; border: 0; padding: 0; margin: 0; background: none; border-radius: 0; min-width: 0; }
button { display: flex; align-items: center; justify-content: center; flex: none; white-space: nowrap; }
select { appearance: none; flex: 1; opacity: 1; }
svg { display: block; flex: none; width: 20px; height: 20px; fill: none; stroke: #3d434f; stroke-width: 1; }
svg.a, .dd svg { width: 10px; height: 10px; }
.dim { opacity: .5; }
.defs { position: absolute; width: 0; height: 0; }
i { flex: none; }

/* title bar */
.title { height: 24px; flex: none; display: flex; background: #fff; padding-left: 41px; }
.qat { display: flex; align-items: center; background: #e4e4e4; border-top: 1px solid #bbb; border-right: 2px solid #999; padding-left: 5px; width: 394px; }
.qat > button { width: 24px; height: 22px; }
.qat > .dd { width: 12px; }
.wsbox { display: flex; align-items: center; height: 23px; flex: 1; border: 1px solid #777; background: linear-gradient(#c9c9c9, #e0e0e0); padding: 0; }
.qat > .more { width: 16px; }
.more svg { width: 10px; height: 12px; }
.caption { flex: 1; display: flex; align-items: center; justify-content: center; gap: 12px; }
.info { display: flex; align-items: center; width: 448px; background: #e4e4e4; border: 1px solid #999; border-bottom: 0; }
.info > button { width: 24px; height: 23px; }
.info > .tiny { width: 13px; }
.tiny svg { width: 10px; height: 10px; }
.info input { width: 180px; height: 23px; border: 1px solid #000; background: #fff; padding: 0 2px; font-size: 11px; font-style: italic; }
.info input::placeholder { color: #666; opacity: 1; }
.info > .login { width: 123px; gap: 2px; }
.info > .wide { width: 40px; gap: 2px; }
.info > .hlp { border-left: 1px solid #bbb; width: 42px; }
.win { display: flex; width: 163px; padding-left: 25px; }
.win button { width: 45px; }
.win svg { width: 12px; height: 12px; stroke: #888; }
.app { position: absolute; left: 0; top: 0; z-index: 2; width: 41px; height: 41px; border: 1px solid #000; background: linear-gradient(#d5d5d5, #999 50%, #6b6b6b); }
.app .logo { width: 26px; height: 32px; margin-bottom: 4px; stroke: none; }

/* menu bar */
.menu { height: 21px; flex: none; display: flex; align-items: center; padding-left: 45px; background: linear-gradient(#9b9b9b, #585858); border-top: 1px solid #222; color: #fff; }
.menu button { padding: 0 10px; height: 20px; }
.mdi { margin-left: auto; margin-right: 2px; width: 46px; height: 16px; stroke: #222; }

/* file tabs */
.ftabs { height: 25px; flex: none; display: flex; align-items: flex-end; padding-left: 18px; background: #b2b2b2; }
.ft { position: relative; height: 22px; justify-content: flex-start; padding-top: 2px; }
.ft span, .ft .x { position: relative; }
.ft .shape { position: absolute; left: 0; top: 0; width: 100%; height: 100%; stroke: none; }
.start { width: 128px; padding-left: 14px; color: #666; }
.cur { width: 158px; padding-left: 14px; margin-left: -5px; }
.cur .x { width: 10px; height: 10px; margin-left: auto; margin-right: 14px; }
.plus { margin: 0 0 3px 4px; }
.plus svg { width: 22px; height: 16px; }

/* toolbars */
.bars { flex: none; height: 59px; display: flex; flex-direction: column; gap: 3px; padding-top: 4px; }
.row { display: flex; gap: 1px; }
.bar { display: flex; align-items: center; height: 24px; border: 1px solid #77797d; background: #f0f0f0; }
.bar > button { width: 23px; height: 22px; }
.bar > .dd { width: 12px; }
.grip { width: 8px; align-self: stretch; background: radial-gradient(circle, #444 1px, transparent 1px) 0 0 / 3px 3px content-box, #a2a5ab; padding: 3px 1px; }
.sep { width: 6px; height: 18px; padding: 0 2px; background: #999 content-box; background-clip: content-box; }
.combo { display: flex; align-items: center; height: 22px; background: #e1e1e1; border: 1px solid #aaa; padding: 0 1px 0 5px; }
.c119 { width: 120px; }
.c125 { width: 125px; }
.c149 { width: 150px; }
.c159 { width: 160px; }
.c174 { width: 174px; padding-left: 8px; }
.c299 { width: 299px; padding-left: 2px; }
.off { background: #ccc; color: #777; padding-left: 9px; }
.off select { opacity: 1; color: #777; }
.off .a { opacity: .4; }
.m { width: 16px; height: 18px; margin-right: 1px; }
.sw { width: 10px; height: 10px; background: #000; margin-right: 4px; }
.ln { width: 35px; height: 1px; background: #000; margin-right: 5px; }
.l60 { width: 60px; }

/* work area */
main { flex: 1; display: flex; min-height: 0; }
.panel { width: 270px; flex: none; display: flex; flex-direction: column; padding-bottom: 5px; }
.panel h1, .panel h2 { margin: 0; font-size: 12px; line-height: 16px; white-space: nowrap; }
.panel h1 { height: 24px; padding: 3px 0 0 15px; font-weight: 400; background: #e8e8e8; border-radius: 6px; }
.panel h2 { height: 22px; flex: none; display: flex; align-items: center; justify-content: space-between; padding: 0 6px 0 9px; background: #e4e4e4; border: 1px solid #a0a0a0; font-weight: 600; }
.panel h2 b { width: 6px; height: 2px; background: #666; }
.tree { list-style: none; margin: 0; padding: 0 0 0 7px; height: 233px; flex: none; border: 1px solid #a0a0a0; border-width: 0 1px 1px; background: #f8f8f8; }
.tree li { display: flex; align-items: center; height: 18px; gap: 3px; position: relative; }
.tree svg { width: 18px; height: 18px; margin: 0 1px 0 2px; }
.exp { width: 9px; height: 9px; border: 1px solid #999; background: linear-gradient(#3b5ca8, #3b5ca8) center / 5px 1px no-repeat, linear-gradient(#3b5ca8, #3b5ca8) center / 1px 5px no-repeat, #fff; }
.tree li + li::before { content: ""; position: absolute; left: 4px; top: -5px; height: 9px; border-left: 1px dotted #999; }
.split { height: 9px; flex: none; border: 1px solid #a0a0a0; background: #e6e6e6; }
.dots { background: repeating-linear-gradient(90deg, #999 0 2px, #e6e6e6 2px 4px) 50% 3px / 18px 2px no-repeat, #e6e6e6; }
.details { flex: 1; border: 1px solid #a0a0a0; border-top: 0; }
.prev { height: 173px; flex: none; border: 1px solid #a0a0a0; border-top: 0; }
.vbar { flex: none; align-self: flex-start; width: 25px; margin: 0 5px 0 1px; border: 1px solid #77797d; background: #f0f0f0; }
.vbar button { width: 23px; height: 22px; }
.vgrip { display: block; height: 7px; background: radial-gradient(circle, #444 1px, transparent 1px) 0 0 / 3px 3px content-box, #a2a5ab; padding: 1px 4px; }
.mod { margin: 0 4px 0 3px; }
.canvas { flex: 1; position: relative; background: #707072; margin-bottom: 1px; min-width: 0; }
.drawing { position: absolute; left: 0; top: 0; width: 100%; height: 100%; }
.vplabel { position: absolute; left: 4px; top: 6px; color: #fff; font-size: 11px; }
.cube { position: absolute; right: 23px; top: 22px; width: 120px; height: 120px; border: 12px solid #818183; border-radius: 50%; display: flex; align-items: center; justify-content: center; color: #ccc; font-size: 20px; line-height: 20px; }
.cube span { position: absolute; }
.cube .n { top: -16px; }
.cube .s { bottom: -15px; }
.cube .w { left: -13px; }
.cube .e { right: -14px; }
.cube button { width: 50px; height: 50px; background: #b9bac2; border: 9px solid #c6c6c6; color: #5a5c66; font-size: 14px; }
.ucs { position: absolute; right: 46px; top: 169px; width: 75px; height: 18px; border-radius: 4px; background: #adaeba; border: 1px solid #999; color: #5f6068; font-size: 11px; gap: 4px; line-height: 14px; }
.ucs svg { width: 10px; height: 10px; }
.nav { position: absolute; right: 2px; top: 211px; width: 35px; height: 213px; border-radius: 4px; background: #919192; outline: 1px solid #5c5c5e; outline-offset: -1px; }
.nav svg { width: 35px; height: 213px; }
.cmd { position: absolute; left: 262px; right: 0; bottom: 0; height: 26px; display: flex; align-items: center; background: #d4d4d4; border-bottom: 1px solid #999; }
.cmdh { width: 53px; height: 26px; display: flex; align-items: center; gap: 6px; padding-left: 3px; background: linear-gradient(#777, #4c4c4c); }
.cmdh svg { width: 14px; height: 16px; }
.grip2 { width: 4px; height: 18px; background: repeating-linear-gradient(#aaa 0 2px, transparent 2px 4px); }
.cmd button { padding: 0 4px; }
.cmd button svg:first-child { width: 16px; height: 16px; }
.cmd input { width: 520px; padding-left: 2px; font: italic 12px/16px "Liberation Mono", monospace; }
.cmd input::placeholder { color: #8b8b8b; opacity: 1; }
.cmd .up { position: absolute; right: 264px; }

/* layout tabs and status bar */
.status { height: 29px; flex: none; display: flex; position: relative; background: #b2b2b2; border-top: 1px solid #999; }
.ltabs { display: flex; flex: 1; align-items: flex-start; padding-left: 13px; min-width: 0; overflow: hidden; }
.ltabs button { height: 17px; padding: 0 10px; color: #5c5c5c; background: linear-gradient(#d2d2d2, #e6e6e6); clip-path: polygon(0 0, 100% 0, calc(100% - 5px) 80%, calc(100% - 8px) 100%, 8px 100%, 5px 80%); }
.ltabs .on { background: #fbfbfb; color: #000; font-weight: 700; }
.ltabs .add { width: 24px; padding: 0; margin-left: 3px; height: 16px; clip-path: none; border-radius: 8px 2px 8px 4px; }
.add svg { width: 10px; height: 10px; }
.dbl { width: 28px; padding-bottom: 8px; }
.dbl svg { width: 10px; height: 14px; }
.tools { display: flex; background: #e9e9e9; width: 588px; border-bottom: 2px solid #f8f8f8; }
.tools button { width: 24px; }
.tools .model { width: 60px; color: #111; }
.tools .dd { width: 16px; }
.tools .sc { width: 33px; color: #555; gap: 2px; }
.tools .g { margin-right: 3px; border-right: 1px solid #f8f8f8; }
.tools svg { stroke: #555; }
.popup { position: absolute; right: 0; bottom: 27px; width: 297px; padding: 2px; background: #e6e6e6; border: 1px solid #f2f2f2; border-bottom: 0; }
.popup button { width: 100%; height: 24px; justify-content: flex-start; padding-left: 19px; color: #000; position: relative; }
.popup .hot { background: linear-gradient(#fff, #ececec); border: 1px solid #a0a0a0; padding-left: 18px; }
.popup .tall { height: 28px; }
.popup svg { position: absolute; left: 3px; width: 12px; height: 12px; }
.popup hr { margin: 1px 0; border: 0; border-top: 1px solid #9a9a9a; }

/* taskbar */
.task { height: 40px; flex: none; display: flex; background: #171a1d; color: #fff; }
.task > button { width: 48px; height: 40px; }
.task > .view { margin-right: 2px; }
.task > .run { width: 49px; background: linear-gradient(#76b9ed, #76b9ed) center bottom / 40px 2px no-repeat; }
.task > .act { background: linear-gradient(#76b9ed, #76b9ed) center bottom / 48px 2px no-repeat, #47494b; }
.task > button svg { width: 24px; height: 24px; }
.tray { margin-left: auto; display: flex; padding-right: 5px; }
.tray button { width: 24px; height: 40px; }
.tray svg { width: 16px; height: 16px; }
.tray .ppl { margin-right: 12px; }
.tray .lang { width: 36px; }
.tray .clock { width: 68px; flex-direction: column; line-height: 18px; }
.tray .note { width: 45px; position: relative; }
.tray .note svg { width: 24px; height: 26px; }
.note span { position: absolute; left: 24px; top: 16px; }
```
